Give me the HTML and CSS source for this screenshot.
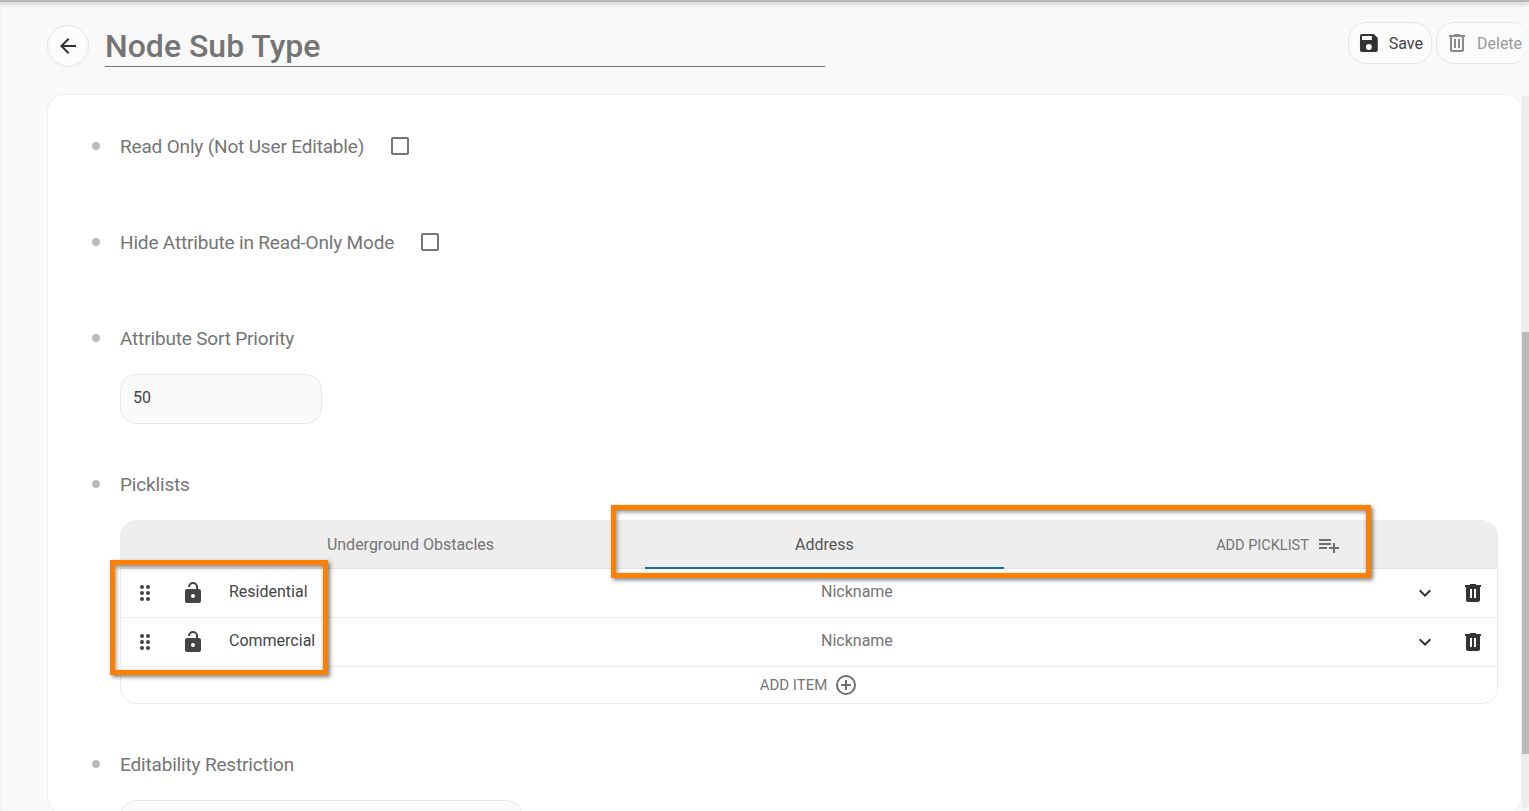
FILE: index.html
```html
<!DOCTYPE html>
<html lang="en">
<head>
<meta charset="utf-8">
<title>Node Sub Type</title>
<link rel="stylesheet" href="styles.css">
</head>
<body>
<div class="page">
  <header class="head">
    <button class="back" aria-label="Back">
      <svg width="24" height="24" viewBox="0 0 24 24"><path d="M20 11H7.83l5.59-5.59L12 4l-8 8 8 8 1.41-1.41L7.83 13H20z" fill="#333"/></svg>
    </button>
    <h1 class="title">Node Sub Type</h1>
    <div class="actions">
      <button class="act save">
        <svg width="24" height="24" viewBox="0 0 24 24"><path d="M17 3H5a2 2 0 0 0-2 2v14a2 2 0 0 0 2 2h14a2 2 0 0 0 2-2V7l-4-4zm-5 16a3 3 0 1 1 0-6 3 3 0 0 1 0 6zm3-10H5V5h10v4z" fill="#333"/></svg>
        <span>Save</span>
      </button>
      <button class="act del">
        <svg width="24" height="24" viewBox="0 0 24 24"><path d="M15 4V3H9v1H4v2h1v13c0 1.1.9 2 2 2h10c1.1 0 2-.9 2-2V6h1V4h-5zm2 15H7V6h10v13zM9 8h2v9H9zm4 0h2v9h-2z" fill="#8a8a8a"/></svg>
        <span>Delete</span>
      </button>
    </div>
  </header>

  <main class="card">
    <ul class="props">
      <li class="prop check-prop">
        <span class="label">Read Only (Not User Editable)</span><span class="box"></span>
      </li>
      <li class="prop check-prop">
        <span class="label">Hide Attribute in Read-Only Mode</span><span class="box"></span>
      </li>
      <li class="prop">
        <span class="label">Attribute Sort Priority</span>
        <div class="num">50</div>
      </li>
      <li class="prop">
        <span class="label">Picklists</span>
        <div class="picklist">
          <div class="tabs">
            <div class="tab">Underground Obstacles</div>
            <div class="tab active">Address</div>
            <div class="tab add">ADD PICKLIST
              <svg width="24" height="24" viewBox="0 0 24 24"><path d="M14 10H2v2h12v-2zm0-4H2v2h12V6zm4 8v-4h-2v4h-4v2h4v4h2v-4h4v-2h-4zM2 16h8v-2H2v2z" fill="#6f6f6f"/></svg>
            </div>
          </div>
          <div class="row">
            <svg class="drag" width="12" height="18" viewBox="0 0 12 18"><g fill="#444"><circle cx="3" cy="3" r="2"/><circle cx="9" cy="3" r="2"/><circle cx="3" cy="9" r="2"/><circle cx="9" cy="9" r="2"/><circle cx="3" cy="15" r="2"/><circle cx="9" cy="15" r="2"/></g></svg>
            <svg class="lock" width="24" height="24" viewBox="0 0 24 24"><path d="M18 8h-1V6a5 5 0 0 0-10 0h2a3 3 0 0 1 6 0v2H6a2 2 0 0 0-2 2v10a2 2 0 0 0 2 2h12a2 2 0 0 0 2-2V10a2 2 0 0 0-2-2zm-6 9a2 2 0 1 1 0-4 2 2 0 0 1 0 4z" fill="#444"/></svg>
            <span class="name">Residential</span>
            <span class="nick">Nickname</span>
            <svg class="chev" width="24" height="24" viewBox="0 0 24 24"><path d="M7.41 8.59 12 13.17l4.59-4.58L18 10l-6 6-6-6z" fill="#333"/></svg>
            <svg class="trash" width="24" height="24" viewBox="0 0 24 24"><path d="M15 4V3H9v1H4v2h1v13c0 1.1.9 2 2 2h10c1.1 0 2-.9 2-2V6h1V4h-5zM11 17H9V8h2v9zm4 0h-2V8h2v9z" fill="#333"/></svg>
          </div>
          <div class="row">
            <svg class="drag" width="12" height="18" viewBox="0 0 12 18"><g fill="#444"><circle cx="3" cy="3" r="2"/><circle cx="9" cy="3" r="2"/><circle cx="3" cy="9" r="2"/><circle cx="9" cy="9" r="2"/><circle cx="3" cy="15" r="2"/><circle cx="9" cy="15" r="2"/></g></svg>
            <svg class="lock" width="24" height="24" viewBox="0 0 24 24"><path d="M18 8h-1V6a5 5 0 0 0-10 0h2a3 3 0 0 1 6 0v2H6a2 2 0 0 0-2 2v10a2 2 0 0 0 2 2h12a2 2 0 0 0 2-2V10a2 2 0 0 0-2-2zm-6 9a2 2 0 1 1 0-4 2 2 0 0 1 0 4z" fill="#444"/></svg>
            <span class="name">Commercial</span>
            <span class="nick">Nickname</span>
            <svg class="chev" width="24" height="24" viewBox="0 0 24 24"><path d="M7.41 8.59 12 13.17l4.59-4.58L18 10l-6 6-6-6z" fill="#333"/></svg>
            <svg class="trash" width="24" height="24" viewBox="0 0 24 24"><path d="M15 4V3H9v1H4v2h1v13c0 1.1.9 2 2 2h10c1.1 0 2-.9 2-2V6h1V4h-5zM11 17H9V8h2v9zm4 0h-2V8h2v9z" fill="#333"/></svg>
          </div>
          <div class="add-item">ADD ITEM
            <svg width="24" height="24" viewBox="0 0 24 24"><path d="M13 7h-2v4H7v2h4v4h2v-4h4v-2h-4V7zm-1-5a10 10 0 1 0 0 20 10 10 0 0 0 0-20zm0 18a8 8 0 1 1 0-16 8 8 0 0 1 0 16z" fill="#6f6f6f"/></svg>
          </div>
        </div>
      </li>
      <li class="prop">
        <span class="label">Editability Restriction</span>
        <div class="select"></div>
      </li>
    </ul>
  </main>
</div>

<div class="scroll"><div class="thumb"></div></div>
<div class="topshade"></div>
<div class="mark mark-tabs"></div>
<div class="mark mark-rows"></div>
</body>
</html>
```

FILE: styles.css
```css
* { box-sizing: border-box; }
html, body { margin: 0; height: 100%; overflow: hidden; }
body {
  background: #f9f9f9;
  font-family: Roboto, "Liberation Sans", sans-serif;
  color: #757575;
  box-shadow: inset 2px 0 2px rgba(0,0,0,.025);
}
button { font: inherit; background: none; padding: 0; cursor: pointer; }

.page { width: 1522px; height: 811px; padding: 25px 0 0 47px; overflow: hidden; }

.head { display: flex; align-items: flex-start; height: 69px; }
.back {
  width: 42px; height: 42px; border-radius: 50%;
  border: 1px solid #e6e6e6; background: #fbfbfb;
  display: flex; align-items: center; justify-content: center;
}
.title {
  margin: 0 0 0 16px; width: 720px; height: 42px;
  font-size: 32px; font-weight: 500; line-height: 42px; color: #757575;
  border-bottom: 1px solid #757575;
}
.actions { margin-left: auto; display: flex; gap: 4px; margin-top: -3px; margin-right: -8px; }
.act {
  height: 42px; border-radius: 18px; border: 1px solid #e6e6e6;
  display: flex; align-items: center; gap: 8px; font-size: 16px;
  padding: 0 8px; background: #fbfbfb;
}
.save { width: 84px; color: #444; }
.del { width: 94px; color: #9a9a9a; padding-right: 0; }

.card {
  width: 1475px; height: 720px; background: #fff;
  border: 1px solid #f0f0f0; border-radius: 16px; overflow: hidden;
}
.props { list-style: none; margin: 0; padding: 0; }
.prop { position: relative; padding-left: 72px; font-size: 19px; line-height: 24px; }
.prop::before {
  content: ""; position: absolute; left: 44px; top: 8px;
  width: 8px; height: 8px; border-radius: 50%; background: #bcbcbc;
}
.label { display: block; padding-top: 1px; margin-bottom: -1px; color: #757575; letter-spacing: -.17px; }

.prop:nth-child(1) { margin-top: 39px; }
.check-prop { display: flex; align-items: center; height: 24px; margin-bottom: 72px; }
.box {
  width: 18px; height: 18px; margin-left: 27px;
  border: 2px solid #757575; border-radius: 2px;
}
.prop:nth-child(3) { height: 146px; }
.num {
  width: 202px; height: 50px; margin-top: 24px; padding-left: 12px;
  border: 1px solid #e8e8e8; border-radius: 16px; background: #fafafa;
  font-size: 16px; line-height: 46px; color: #444;
}
.prop:nth-child(4) { height: 280px; }

.picklist {
  width: 1378px; height: 184px; margin-top: 24px;
  border: 1px solid #ececec; border-radius: 16px; overflow: hidden;
}
.tabs {
  display: grid; grid-template-columns: 359px 359px 359px;
  column-gap: 55px; padding-left: 110px; height: 48px;
  background: #eeeeee; border-bottom: 1px solid #e2e2e2;
  font-size: 16px; line-height: 47px; color: #757575;
}
.tab { text-align: center; height: 48px; }
.tab.active { color: #555; border-bottom: 2px solid #0f6f96; }
.tab.add {
  display: flex; align-items: center; justify-content: center; gap: 8px;
  font-size: 14.5px; margin-left: 40px; margin-right: -40px;
}
.row {
  position: relative; display: flex; align-items: center;
  height: 49px; border-bottom: 1px solid #ececec; font-size: 16px;
}
.drag { margin-left: 18px; }
.lock { margin-left: 30px; }
.name { margin-left: 24px; padding-bottom: 2px; color: #444; }
.nick { position: absolute; left: 700px; padding-bottom: 2px; color: #757575; }
.chev { position: absolute; left: 1292px; top: 12px; }
.trash { position: absolute; left: 1340px; top: 12px; }
.add-item {
  height: 36px; display: flex; align-items: center; justify-content: center;
  gap: 7px; font-size: 15px; color: #757575;
}
.select {
  width: 403px; height: 50px; margin-top: 24px;
  border: 1px solid #e8e8e8; border-radius: 16px; background: #fafafa;
}

.scroll { position: fixed; right: 0; top: 96px; bottom: 2px; width: 7px; background: #ededed; border-bottom-right-radius: 6px; }
.thumb { position: absolute; left: 0; right: 0; top: 236px; height: 422px; background: #b9b9b9; }
.topshade {
  position: fixed; left: 0; right: 0; top: 0; height: 2px;
  background: #b5b5b5; box-shadow: 0 2px 4px rgba(0,0,0,.3);
}
.mark {
  position: fixed; border: 5px solid #ff8000;
  box-shadow: 2px 2px 4px rgba(0,0,0,.5), inset 1px 2px 4px rgba(0,0,0,.45);
}
.mark-tabs { left: 611px; top: 505px; width: 760px; height: 73px; }
.mark-rows { left: 110px; top: 560px; width: 218px; height: 115px; }
```
